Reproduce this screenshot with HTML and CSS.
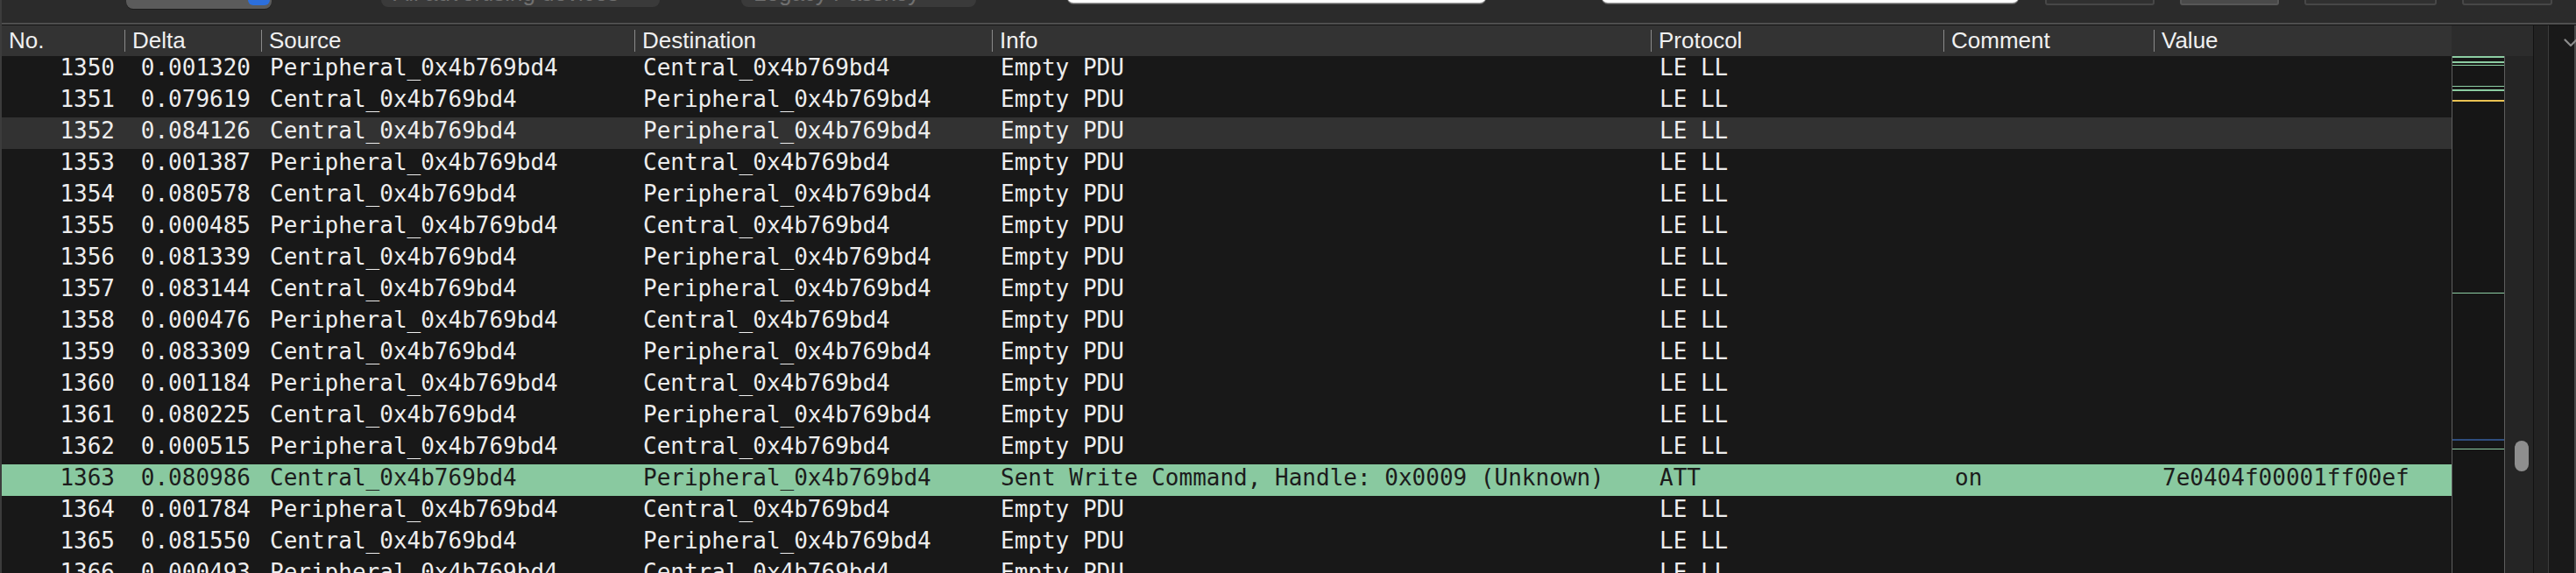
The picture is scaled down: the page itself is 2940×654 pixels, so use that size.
FILE: index.html
```html
<!DOCTYPE html>
<html>
<head>
<meta charset="utf-8">
<link rel="stylesheet" href="styles.css">
</head>
<body>
<div class="window">
  <div class="toolbar">
    <div class="popup"><span class="popup-arrow"></span></div>
    <div class="field field-adv"><span class="ph">All advertising devices</span></div>
    <div class="field field-pair"><span class="ph">Legacy Passkey</span></div>
    <div class="wfield wfield-1"></div>
    <div class="wfield wfield-2"></div>
    <div class="btn btn-1"></div>
    <div class="btn btn-2"></div>
    <div class="btn btn-3"></div>
    <div class="btn btn-4"></div>
  </div>
  <div class="main">
    <div class="table">
      <div class="thead">
        <div class="th first"><span>No.</span></div>
        <div class="th"><span>Delta</span></div>
        <div class="th"><span>Source</span></div>
        <div class="th"><span>Destination</span></div>
        <div class="th"><span>Info</span></div>
        <div class="th"><span>Protocol</span></div>
        <div class="th"><span>Comment</span></div>
        <div class="th"><span>Value</span></div>
      </div>
      <div class="tbody">
        <div class="rows">
          <div class="row"><div class="no">1350</div><div class="dl">0.001320</div><div>Peripheral_0x4b769bd4</div><div>Central_0x4b769bd4</div><div>Empty PDU</div><div>LE LL</div><div></div><div></div></div>
          <div class="row"><div class="no">1351</div><div class="dl">0.079619</div><div>Central_0x4b769bd4</div><div>Peripheral_0x4b769bd4</div><div>Empty PDU</div><div>LE LL</div><div></div><div></div></div>
          <div class="row hover"><div class="no">1352</div><div class="dl">0.084126</div><div>Central_0x4b769bd4</div><div>Peripheral_0x4b769bd4</div><div>Empty PDU</div><div>LE LL</div><div></div><div></div></div>
          <div class="row"><div class="no">1353</div><div class="dl">0.001387</div><div>Peripheral_0x4b769bd4</div><div>Central_0x4b769bd4</div><div>Empty PDU</div><div>LE LL</div><div></div><div></div></div>
          <div class="row"><div class="no">1354</div><div class="dl">0.080578</div><div>Central_0x4b769bd4</div><div>Peripheral_0x4b769bd4</div><div>Empty PDU</div><div>LE LL</div><div></div><div></div></div>
          <div class="row"><div class="no">1355</div><div class="dl">0.000485</div><div>Peripheral_0x4b769bd4</div><div>Central_0x4b769bd4</div><div>Empty PDU</div><div>LE LL</div><div></div><div></div></div>
          <div class="row"><div class="no">1356</div><div class="dl">0.081339</div><div>Central_0x4b769bd4</div><div>Peripheral_0x4b769bd4</div><div>Empty PDU</div><div>LE LL</div><div></div><div></div></div>
          <div class="row"><div class="no">1357</div><div class="dl">0.083144</div><div>Central_0x4b769bd4</div><div>Peripheral_0x4b769bd4</div><div>Empty PDU</div><div>LE LL</div><div></div><div></div></div>
          <div class="row"><div class="no">1358</div><div class="dl">0.000476</div><div>Peripheral_0x4b769bd4</div><div>Central_0x4b769bd4</div><div>Empty PDU</div><div>LE LL</div><div></div><div></div></div>
          <div class="row"><div class="no">1359</div><div class="dl">0.083309</div><div>Central_0x4b769bd4</div><div>Peripheral_0x4b769bd4</div><div>Empty PDU</div><div>LE LL</div><div></div><div></div></div>
          <div class="row"><div class="no">1360</div><div class="dl">0.001184</div><div>Peripheral_0x4b769bd4</div><div>Central_0x4b769bd4</div><div>Empty PDU</div><div>LE LL</div><div></div><div></div></div>
          <div class="row"><div class="no">1361</div><div class="dl">0.080225</div><div>Central_0x4b769bd4</div><div>Peripheral_0x4b769bd4</div><div>Empty PDU</div><div>LE LL</div><div></div><div></div></div>
          <div class="row"><div class="no">1362</div><div class="dl">0.000515</div><div>Peripheral_0x4b769bd4</div><div>Central_0x4b769bd4</div><div>Empty PDU</div><div>LE LL</div><div></div><div></div></div>
          <div class="row att"><div class="no">1363</div><div class="dl">0.080986</div><div>Central_0x4b769bd4</div><div>Peripheral_0x4b769bd4</div><div>Sent Write Command, Handle: 0x0009 (Unknown)</div><div>ATT</div><div class="cm">on</div><div>7e0404f00001ff00ef</div></div>
          <div class="row"><div class="no">1364</div><div class="dl">0.001784</div><div>Peripheral_0x4b769bd4</div><div>Central_0x4b769bd4</div><div>Empty PDU</div><div>LE LL</div><div></div><div></div></div>
          <div class="row"><div class="no">1365</div><div class="dl">0.081550</div><div>Central_0x4b769bd4</div><div>Peripheral_0x4b769bd4</div><div>Empty PDU</div><div>LE LL</div><div></div><div></div></div>
          <div class="row"><div class="no">1366</div><div class="dl">0.000493</div><div>Peripheral_0x4b769bd4</div><div>Central_0x4b769bd4</div><div>Empty PDU</div><div>LE LL</div><div></div><div></div></div>
        </div>
      </div>
    </div>
    <div class="side">
      <div class="side-head"></div>
      <div class="side-body">
        <div class="minimap">
          <span class="mark green" style="top:0px;height:2px"></span>
          <span class="mark green" style="top:6px;height:2px"></span>
          <span class="mark green" style="top:10px;height:1px"></span>
          <span class="mark green" style="top:34px;height:1px"></span>
          <span class="mark green" style="top:38px;height:2px"></span>
          <span class="mark yellow" style="top:50px;height:2px"></span>
          <span class="mark green" style="top:270px;height:1px"></span>
          <span class="mark blue" style="top:437px;height:2px"></span>
          <span class="mark green" style="top:448px;height:1px"></span>
        </div>
        <div class="track"><div class="thumb" style="margin-top:439px"></div></div>
      </div>
    </div>
    <div class="gutter"></div>
    <div class="sidepanel">
      <svg class="chev" width="16" height="10" viewBox="0 0 16 10"><path d="M1.5 1.5 L8 8 L14.5 1.5" fill="none" stroke="#8c8c8c" stroke-width="2.2" stroke-linecap="round" stroke-linejoin="round"/></svg>
    </div>
  </div>
</div>
</body>
</html>
```
FILE: styles.css
```css
* { box-sizing: border-box; }
html, body { margin: 0; padding: 0; }
body {
  background: #2b2b2b;
  overflow: hidden;
  font-family: "Liberation Sans", Arial, sans-serif;
}
.window {
  width: 2940px;
  height: 654px;
  display: flex;
  flex-direction: column;
  border-left: 2px solid #3c3c3c;
  overflow: hidden;
}

/* toolbar (mostly scrolled out of view, only bottoms visible) */
.toolbar {
  height: 28px;
  flex: none;
  display: flex;
  align-items: flex-end;
  overflow: hidden;
  background: #2b2b2b;
  border-bottom: 2px solid #4f4f4f;
}
.popup {
  flex: none;
  width: 166px;
  height: 40px;
  margin-left: 142px;
  margin-bottom: 16px;
  background: #5b5b5b;
  border-radius: 8px;
  box-shadow: 0 1px 0 #1e1e1e;
  display: flex;
  justify-content: flex-end;
  align-items: flex-end;
  padding: 0 2px 4px 0;
}
.popup-arrow {
  width: 25px;
  height: 30px;
  background: #2c6fdc;
  border-radius: 6px;
}
.field {
  flex: none;
  height: 40px;
  margin-bottom: 18px;
  background: #3a3a3a;
  border-radius: 8px;
  display: flex;
  align-items: flex-end;
  padding: 0 12px 0 14px;
  overflow: hidden;
}
.ph {
  font-size: 26px;
  line-height: 29px;
  color: #707070;
  white-space: nowrap;
  margin-bottom: 1px;
}
.field-adv { width: 318px; margin-left: 125px; }
.field-pair { width: 268px; margin-left: 93px; }
.wfield {
  flex: none;
  height: 40px;
  margin-bottom: 23px;
  background: #ffffff;
  border-radius: 7px;
  box-shadow: 0 1px 0 #9a9a9a, 0 2px 0 #5a5a5a;
}
.wfield-1 { width: 478px; margin-left: 104px; }
.wfield-2 { width: 476px; margin-left: 132px; }
.btn {
  flex: none;
  height: 40px;
  margin-bottom: 20px;
  background: #303030;
  border: 2px solid #474747;
  border-radius: 3px;
}
.btn-1 { width: 125px; margin-left: 30px; }
.btn-2 { width: 113px; margin-left: 29px; background: #4a4a4a; border-color: #575757; }
.btn-3 { width: 151px; margin-left: 29px; }
.btn-4 { width: 103px; margin-left: 29px; }

/* main area */
.main {
  flex: 1;
  display: flex;
  min-height: 0;
  border-top: 1px solid #141414;
}
.table {
  width: 2796px;
  flex: none;
  display: flex;
  flex-direction: column;
  background: #181818;
}
.thead, .row {
  display: grid;
  grid-template-columns: 140px 156px 426px 408px 752px 334px 240px 340px;
}
.thead {
  height: 35px;
  flex: none;
  background: #333333;
}
.th {
  display: flex;
  align-items: center;
  min-width: 0;
}
.th span {
  height: 25px;
  line-height: 25px;
  font-size: 26px;
  color: #f0f0f0;
  border-left: 1px solid #8a8a8a;
  padding-left: 8px;
  white-space: nowrap;
}
.th.first span {
  border-left: none;
  padding-left: 8px;
}
.tbody {
  flex: 1;
  overflow: hidden;
}
.rows {
  margin-top: -2px;
}
.row {
  height: 36px;
  font-family: "DejaVu Sans Mono", Menlo, monospace;
  font-size: 26px;
  line-height: 30px;
  color: #ededed;
}
.row > div {
  padding: 0 10px 6px 10px;
  white-space: nowrap;
  overflow: hidden;
}
.row > .no { text-align: right; padding-right: 11px; }
.row > .dl { text-align: right; padding-right: 12px; }
.row > .cm { padding-left: 13px; }
.row.hover { background: #323232; }
.row.att { background: #89c9a0; color: #1c1c1c; }

/* minimap + scrollbar */
.side {
  width: 93px;
  flex: none;
  display: flex;
  flex-direction: column;
}
.side-head {
  height: 35px;
  flex: none;
  background: #2c2c2c;
}
.side-body {
  flex: 1;
  display: flex;
}
.minimap {
  width: 61px;
  flex: none;
  position: relative;
  background: #161616;
  border-left: 1px solid #5e5e5e;
  border-right: 1px solid #5e5e5e;
}
.mark {
  position: absolute;
  left: 0;
  right: 0;
}
.mark.green { background: #8ccda2; }
.mark.yellow { background: #e9c253; }
.mark.blue { background: #2e4d7e; }
.track {
  flex: 1;
  background: #252525;
  padding-left: 11px;
}
.thumb {
  width: 16px;
  height: 35px;
  border-radius: 8px;
  background: #8e8e8e;
}
.gutter {
  width: 17px;
  flex: none;
  background: #222222;
  border-left: 1px solid #121212;
}
.sidepanel {
  flex: 1;
  background: #191919;
  border-left: 1px solid #3c3c3c;
  border-right: 2px solid #4a4a4a;
  display: flex;
  justify-content: flex-end;
  padding-top: 15px;
}
.chev {
  margin-right: -4px;
}
```
